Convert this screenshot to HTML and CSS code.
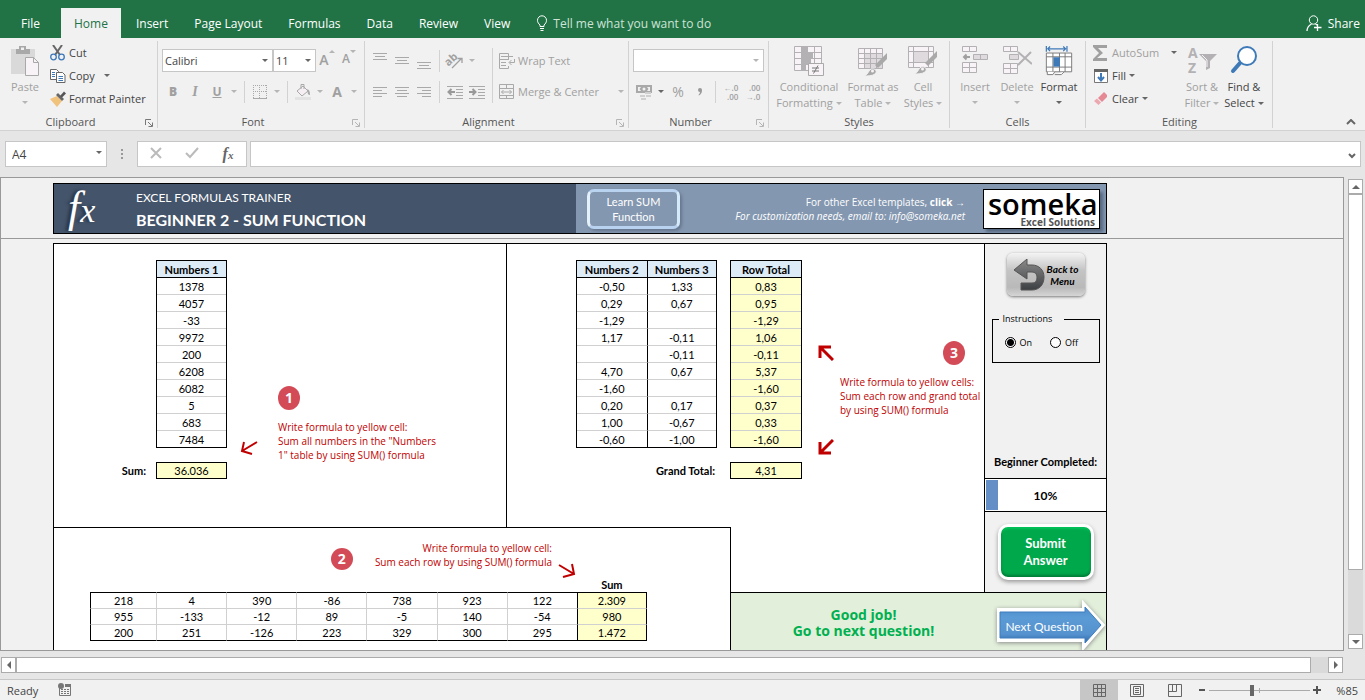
FILE: index.html
```
<!DOCTYPE html>
<html lang="en">
<head>
    <meta charset="UTF-8">
    <meta name="viewport" content="width=device-width, initial-scale=1.0">
    <title>Excel Formulas Trainer</title>
    <link rel="stylesheet" href="styles.css">
</head>
<body>
    <nav class="tabs">
        <a class="tab tab-file" href="#">File</a>
        <a class="tab active" href="#">Home</a>
        <a class="tab" href="#">Insert</a>
        <a class="tab" href="#">Page Layout</a>
        <a class="tab" href="#">Formulas</a>
        <a class="tab" href="#">Data</a>
        <a class="tab" href="#">Review</a>
        <a class="tab" href="#">View</a>
        <a class="tab tell-me" href="#">
            <svg width="12" height="16" viewBox="0 0 12 16" fill="none" stroke="#fff"><path d="M4 11.5V10C2.5 8.5 1.5 7.500 1.500 5.300a4.500 4.500 0 0 1 9 0C10.500 7.500 9.500 8.500 8 10v1.500zM4 13.500h4M4.500 15.500h3"/></svg>
            Tell me what you want to do
        </a>
        <a class="share" href="#">
            <svg width="16" height="17" viewBox="0 0 16 17" fill="none" stroke="#fff"><circle cx="7.500" cy="5" r="4.200"/><path d="M1 16c0-4 2-5.500 4.500-7M9.500 9l1.500 1M11.500 9v7M8 12.500h7.500" stroke-width="1.300"/></svg>
            Share
        </a>
    </nav>

    <div class="ribbon">
        <!-- Clipboard -->
        <section class="group group-clipboard">
            <div class="group-body">
                <button class="big off">
                    <svg width="30" height="30" viewBox="0 0 30 30"><path d="M1 3h24v25H1z" fill="#d9d9d9"/><path d="M6 3h3V0h7v3h4v5H6z" fill="#a9a9a9"/><path d="M11 1.500h3V4h-3z" fill="#f1f1f1"/><path d="M15.500 11.500h8l5 5v13h-13z" fill="#f8f3f7" stroke="#a9a9a9"/><path d="M23.500 11.500v5h5" fill="none" stroke="#a9a9a9"/></svg>
                    <span>Paste</span>
                    <i class="caret"></i>
                </button>
                <div class="stack">
                    <button class="small">
                        <svg width="16" height="16" viewBox="0 0 16 16" fill="none"><path d="M3 0l7 10M12 0L5 10" stroke="#666" stroke-width="2"/><circle cx="3.500" cy="12" r="2.800" stroke="#3e79b8" stroke-width="1.300"/><circle cx="11.500" cy="12" r="2.800" stroke="#3e79b8" stroke-width="1.300"/></svg>
                        Cut
                    </button>
                    <button class="small">
                        <svg width="16" height="16" viewBox="0 0 16 16" fill="#fff" stroke="#666"><path d="M.5 1.500h6l2 2v8h-8z"/><path d="M6.500 4.500h6l2.500 2.500v7.500H6.500z"/><path d="M2 4.500h3M2 6.500h3M2 8.500h3M8.500 8.500h4.500M8.500 10.500h4.500M8.500 12.500h4.500" stroke="#3e79b8"/></svg>
                        Copy <i class="caret copy-caret"></i>
                    </button>
                    <button class="small">
                        <svg width="16" height="16" viewBox="0 0 16 16"><path d="M0 8l7-3 5 5-5 6z" fill="#f0c27c"/><path d="M6 4l2-2 6 6-2 2z" fill="#666"/><path d="M10 5l4-4.500 2 2-4 4z" fill="#555"/></svg>
                        Format Painter
                    </button>
                </div>
            </div>
            <h2 class="caption with-launcher">Clipboard<svg class="launcher" width="8" height="8" viewBox="0 0 8 8" fill="none" stroke="#777"><path d="M.5 6V.5H6M3 3l4 4M7.500 3.500v4h-4"/></svg></h2>
        </section>

        <!-- Font -->
        <section class="group group-font">
            <div class="rows">
                <div class="row">
                    <span class="combo combo-font"><select aria-label="Font"><option>Calibri</option></select></span>
                    <span class="combo combo-size"><select aria-label="Font size"><option>11</option></select></span>
                    <button class="icon off grow" aria-label="Increase font size">A<i class="caret up"></i></button>
                    <button class="icon off shrink" aria-label="Decrease font size">A<i class="caret"></i></button>
                </div>
                <div class="row">
                    <button class="icon off"><b>B</b></button>
                    <button class="icon off"><em>I</em></button>
                    <button class="icon off"><u>U</u></button>
                    <button class="drop off" aria-label="Underline style"><i class="caret"></i></button>
                    <span class="vsep"></span>
                    <button class="icon off" aria-label="Borders">
                        <svg width="14" height="14" viewBox="0 0 14 14" fill="none" stroke="#a9a9a9"><path d="M0 .5h14M0 6.500h14M.5 0v13M6.500 0v13M13.500 0v13" stroke-dasharray="1 1"/><path d="M0 13.500h14"/></svg>
                    </button>
                    <button class="drop off" aria-label="Border style"><i class="caret"></i></button>
                    <span class="vsep"></span>
                    <button class="icon off" aria-label="Fill color">
                        <svg width="16" height="16" viewBox="0 0 16 16"><path d="M2 7l6-5 5 5-6 5z" fill="#f5eff3" stroke="#a9a9a9"/><path d="M6 5V.5h3V5" fill="none" stroke="#a9a9a9"/><path d="M12 5c3 1 3 4 3 6-2 0-3-2-2-4z" fill="#a9a9a9"/><path d="M0 13h16v3H0z" fill="#e3e3e3"/></svg>
                    </button>
                    <button class="drop off" aria-label="Fill colors"><i class="caret"></i></button>
                    <button class="icon off font-color">A</button>
                    <button class="drop off" aria-label="Font colors"><i class="caret"></i></button>
                </div>
            </div>
            <h2 class="caption with-launcher">Font<svg class="launcher" width="8" height="8" viewBox="0 0 8 8" fill="none" stroke="#b5b5b5"><path d="M.5 6V.5H6M3 3l4 4M7.500 3.500v4h-4"/></svg></h2>
        </section>

        <!-- Alignment -->
        <section class="group group-alignment">
            <div class="group-body">
                <div class="rows">
                    <div class="row">
                        <button class="icon off" aria-label="Top align"><svg width="14" height="16" viewBox="0 0 14 16" stroke="#a9a9a9"><path d="M0 .5h14M2 3.500h10M0 6.500h14"/></svg></button>
                        <button class="icon off" aria-label="Middle align"><svg width="14" height="16" viewBox="0 0 14 16" stroke="#a9a9a9"><path d="M0 4.500h14M2 7.500h10M0 10.500h14"/></svg></button>
                        <button class="icon off" aria-label="Bottom align"><svg width="14" height="16" viewBox="0 0 14 16" stroke="#a9a9a9"><path d="M0 9.500h14M2 12.500h10M0 15.500h14"/></svg></button>
                        <span class="vsep"></span>
                        <button class="icon off" aria-label="Orientation"><svg class="spill" width="18" height="16" viewBox="0 0 18 16"><text x="0" y="10" transform="rotate(-42 6 9)" font-size="11" font-weight="bold" fill="#a0a0a0">ab</text><path d="M6 15l9-9M11.500 5.500H16V10" fill="none" stroke="#a0a0a0" stroke-width="1.300"/></svg></button>
                        <button class="drop off" aria-label="Orientation options"><i class="caret"></i></button>
                    </div>
                    <div class="row">
                        <button class="icon off" aria-label="Align left"><svg width="14" height="12" viewBox="0 0 14 12" stroke="#a9a9a9"><path d="M0 1.500h14M0 4.500h9M0 7.500h14M0 10.500h9"/></svg></button>
                        <button class="icon off" aria-label="Center"><svg width="14" height="12" viewBox="0 0 14 12" stroke="#a9a9a9"><path d="M0 1.500h14M2 4.500h10M0 7.500h14M2 10.500h10"/></svg></button>
                        <button class="icon off" aria-label="Align right"><svg width="14" height="12" viewBox="0 0 14 12" stroke="#a9a9a9"><path d="M0 1.500h14M5 4.500h9M0 7.500h14M5 10.500h9"/></svg></button>
                        <span class="vsep"></span>
                        <button class="icon off" aria-label="Decrease indent"><svg width="16" height="14" viewBox="0 0 16 14" stroke="#a9a9a9"><path d="M0 1.500h16M9 4.500h7M9 7.500h7M9 10.500h7M0 13.500h16"/><path d="M2 7h6M4.500 4L1.500 7l3 3" fill="none" stroke="#999" stroke-width="2"/></svg></button>
                        <button class="icon off" aria-label="Increase indent"><svg width="16" height="14" viewBox="0 0 16 14" stroke="#a9a9a9"><path d="M0 1.500h16M9 4.500h7M9 7.500h7M9 10.500h7M0 13.500h16"/><path d="M0 7h6M3.500 4l3 3-3 3" fill="none" stroke="#999" stroke-width="2"/></svg></button>
                    </div>
                </div>
                <span class="vsep tall"></span>
                <div class="rows wide">
                    <button class="small off">
                        <svg width="16" height="16" viewBox="0 0 16 16" fill="none" stroke="#a9a9a9"><path d="M9.500 7V.5h-9v15h9V13M.5 6.500h9M2 3.500h12M2 9.500h5M2 12.500h5M15.500 6v3.500h-5M12.500 7l-2.500 2.500 2.500 2.500"/></svg>
                        Wrap Text
                    </button>
                    <button class="small off">
                        <svg width="16" height="16" viewBox="0 0 16 16" fill="none" stroke="#a9a9a9"><path d="M.5.5h14v14H.5zM.5 4.500h14M.5 11.500h14M7.500.5v4M7.500 11.500v3M2.500 8h10M4.500 6L2.500 8l2 2M10.500 6l2 2-2 2"/></svg>
                        Merge &amp; Center <i class="caret push"></i>
                    </button>
                </div>
            </div>
            <h2 class="caption with-launcher">Alignment<svg class="launcher" width="8" height="8" viewBox="0 0 8 8" fill="none" stroke="#b5b5b5"><path d="M.5 6V.5H6M3 3l4 4M7.500 3.500v4h-4"/></svg></h2>
        </section>

        <!-- Number -->
        <section class="group group-number">
            <div class="rows">
                <div class="row">
                    <span class="combo combo-number"><select aria-label="Number format"><option></option></select></span>
                </div>
                <div class="row">
                    <button class="icon off" aria-label="Currency"><svg width="16" height="16" viewBox="0 0 16 16"><path d="M0 1h16v8H0z" fill="#a9a9a9"/><path d="M2 3h3L3.500 5 5 7H2zM14 3h-3l1.500 2L11 7h3z" fill="#f1f1f1"/><circle cx="8" cy="5" r="1.500" fill="#f1f1f1"/><path d="M9 8h6v2H9zM10 11h5v2h-5zM4 11h5v2H4zM5 14h5v2H5z" fill="#d0d0d0"/></svg></button>
                    <button class="drop" aria-label="Currency formats"><i class="caret"></i></button>
                    <button class="icon off percent">%</button>
                    <button class="icon off" aria-label="Comma style"><svg width="6" height="8" viewBox="0 0 6 8"><path d="M3 0a2 2 0 0 1 2 2c0 3-1 4-3 5.500L1.500 7C2.500 6 3 5 3 4a2 2 0 0 1 0-4z" fill="#999"/></svg></button>
                    <span class="vsep"></span>
                    <button class="icon off decimal"><span>←.0<br>.00</span></button>
                    <button class="icon off decimal"><span>.00<br>→.0</span></button>
                </div>
            </div>
            <h2 class="caption with-launcher">Number<svg class="launcher" width="8" height="8" viewBox="0 0 8 8" fill="none" stroke="#b5b5b5"><path d="M.5 6V.5H6M3 3l4 4M7.500 3.500v4h-4"/></svg></h2>
        </section>

        <!-- Styles -->
        <section class="group group-styles">
            <div class="group-body">
                <button class="big off conditional">
                    <svg width="30" height="30" viewBox="0 0 30 30"><path d="M.5.5h27v24H.5z" fill="#f8f3f7"/><path d="M8 1h6v5H8zM8 7h11v5H8zM8 13h9v5H8zM8 19h4v5H8z" fill="#b3b1b3"/><path d="M.5.5h27v24H.5zM.5 6.500h27M.5 12.500h27M.5 18.500h27M7.500.5v24M20.500.5v24" fill="none" stroke="#b3b1b3"/><path d="M14.500 17.500h15v12h-15z" fill="#f8f3f7" stroke="#a9a9a9"/><path d="M18 22h7M18 25h7M24 19.500l-4.500 8" stroke="#777"/></svg>
                    <span>Conditional<br>Formatting<i class="caret"></i></span>
                </button>
                <button class="big off format-as">
                    <svg width="30" height="30" viewBox="0 0 30 30"><path d="M.5 2.500h24v20H.5z" fill="#f8f3f7"/><path d="M7 8h18v15H7z" fill="#dedade"/><path d="M.5 2.500h24v20H.5zM.5 7.500h24M.5 12.500h24M.5 17.500h24M6.500 2.500v20M12.500 2.500v20M18.500 2.500v20" fill="none" stroke="#b3b1b3"/><path d="M29 7v6l-9 9-3-3z" fill="#a9a9a9"/><path d="M6 30c4-1 4-5 7-7 4-1 7 2 4 5-3 2-7 2-11 2z" fill="#a9a9a9" stroke="#f1f1f1"/><circle cx="14.500" cy="25" r="1.500" fill="#f8f3f7"/></svg>
                    <span>Format as<br>Table<i class="caret"></i></span>
                </button>
                <button class="big off cell-styles">
                    <svg width="30" height="30" viewBox="0 0 30 30"><path d="M.5.5h25v21H.5z" fill="#f8f3f7"/><path d="M5 6h15v10H5z" fill="#dedade"/><path d="M.5.5h25v21H.5zM.5 5.500h25M.5 16.500h25M5.500.5v21M20.500.5v21" fill="none" stroke="#b3b1b3"/><path d="M29 5v6l-9 9-3-3z" fill="#a9a9a9"/><path d="M6 28c4-1 4-5 7-7 4-1 7 2 4 5-3 2-7 2-11 2z" fill="#a9a9a9" stroke="#f1f1f1"/><circle cx="14.500" cy="23" r="1.500" fill="#f8f3f7"/></svg>
                    <span>Cell<br>Styles<i class="caret"></i></span>
                </button>
            </div>
            <h2 class="caption">Styles</h2>
        </section>

        <!-- Cells -->
        <section class="group group-cells">
            <div class="group-body">
                <button class="big off">
                    <svg width="28" height="30" viewBox="0 0 28 30" fill="#f8f3f7" stroke="#b3b1b3"><path d="M1.500.5h14v5h-14zM8.500.5v5"/><path d="M12.500 8.500h14v5h-14zM19.500 8.500v5" fill="#dedade"/><path d="M1.500 16.500h14v10h-14zM1.500 21.500h14M8.500 16.500v10"/><path d="M9 11H3M5.500 8.500L3 11l2.500 2.500" fill="none" stroke="#a0a0a0" stroke-width="2"/></svg>
                    <span>Insert</span>
                    <i class="caret"></i>
                </button>
                <button class="big off">
                    <svg width="30" height="30" viewBox="0 0 30 30" fill="#f8f3f7" stroke="#b3b1b3"><path d="M1.500.5h14v5h-14zM8.500.5v5"/><path d="M7.500 8.500h9v5h-9z" fill="#dedade"/><path d="M1.500 17.500h14v10h-14zM1.500 22.500h14M8.500 17.500v10"/><path d="M16 6l14 12M29 6L16 19" fill="none" stroke-width="2"/></svg>
                    <span>Delete</span>
                    <i class="caret"></i>
                </button>
                <button class="big">
                    <svg width="28" height="32" viewBox="0 0 28 32" fill="#fff" stroke="#777"><path d="M.5 7.500h27v20H.5zM.5 11.500h27M.5 22.500h27M7.500 7.500v20M14.500 7.500v20M20.500 7.500v20"/><path d="M1.500 27.500v3h6l2-3M9.500 30.500h7l3-3"/><path d="M8 12h7v10H8z" fill="#3e79b8" stroke="none"/><path d="M.5 0v6M22.500 0v6M2 3h19M4.500.5L2 3l2.500 2.500M18.500.5L21 3l-2.500 2.500" fill="none" stroke="#3e79b8" stroke-width="1.300"/></svg>
                    <span>Format</span>
                    <i class="caret"></i>
                </button>
            </div>
            <h2 class="caption">Cells</h2>
        </section>

        <!-- Editing -->
        <section class="group group-editing">
            <div class="group-body">
                <div class="stack">
                    <button class="small off">
                        <svg width="16" height="16" viewBox="0 0 16 16"><path d="M0 0h14v3H5l5 5-6 5h10v3H0v-2l6-6L0 2z" fill="#a0a0a0"/></svg>
                        AutoSum <i class="caret dark push"></i>
                    </button>
                    <button class="small">
                        <svg width="16" height="16" viewBox="0 0 16 16"><path d="M1.500 1.500h13v13h-13z" fill="#fff" stroke="#777"/><path d="M1 1h14v3H1z" fill="#666"/><path d="M8 5v7M5 9l3 3.500L11 9" fill="none" stroke="#3e79b8" stroke-width="2"/></svg>
                        Fill<i class="caret"></i>
                    </button>
                    <button class="small">
                        <svg width="16" height="16" viewBox="0 0 16 16"><path d="M5 7l6-6 3 3v2l-5 5z" fill="#e58a94"/><path d="M1 10l3-2.500 4 4L5.500 14z" fill="#eda7ae"/></svg>
                        Clear<i class="caret"></i>
                    </button>
                </div>
                <button class="big off">
                    <svg class="spill" width="30" height="30" viewBox="0 0 30 30"><text x="1" y="12" font-size="14" font-weight="bold" fill="#b3b1b3">A</text><text x="1" y="27" font-size="14" font-weight="bold" fill="#b3b1b3">Z</text><path d="M12 8h18l-7 7v7l-4 2v-9z" fill="#b3b1b3"/><path d="M15 9l5 5v7" fill="none" stroke="#f8f3f7"/></svg>
                    <span>Sort &amp;<br>Filter<i class="caret"></i></span>
                </button>
                <button class="big">
                    <svg width="28" height="30" viewBox="0 0 28 30"><path d="M10 17l-7 8" stroke="#3e79b8" stroke-width="4" stroke-linecap="round"/><circle cx="17" cy="10" r="9" fill="#fff" stroke="#3e79b8" stroke-width="2"/></svg>
                    <span>Find &amp;<br>Select<i class="caret"></i></span>
                </button>
            </div>
            <h2 class="caption">Editing</h2>
        </section>
        <button class="collapse" aria-label="Collapse the ribbon"><svg width="10" height="6" viewBox="0 0 10 6" fill="none" stroke="#666" stroke-width="2"><path d="M1 5l4-4 4 4"/></svg></button>
    </div>

    <div class="formula-bar">
        <span class="combo name-box"><select aria-label="Name box"><option>A4</option></select></span>
        <svg class="grip" width="3" height="12" viewBox="0 0 3 12" fill="#999"><path d="M0 1h2v2H0zM0 5h2v2H0zM0 9h2v2H0z"/></svg>
        <div class="fx-buttons">
            <button aria-label="Cancel"><svg width="12" height="12" viewBox="0 0 12 12" stroke="#bbb" stroke-width="2"><path d="M1 1l10 10M11 1L1 11"/></svg></button>
            <button aria-label="Enter"><svg width="14" height="12" viewBox="0 0 14 12" fill="none" stroke="#bbb" stroke-width="2"><path d="M1 6l4 4 8-9"/></svg></button>
            <button class="fx-insert">f<small>x</small></button>
        </div>
        <div class="formula-field">
            <input type="text" aria-label="Formula">
            <button aria-label="Expand formula bar"><svg width="8" height="6" viewBox="0 0 8 6" fill="none" stroke="#666" stroke-width="2"><path d="M1 1l3 3 3-3"/></svg></button>
        </div>
    </div>

    <div class="window">
        <main class="sheet">
            <div class="frozen">
                <header class="banner">
                    <div class="banner-title">
                        <div class="fx-logo">f<span>x</span></div>
                        <div>
                            <p>EXCEL FORMULAS TRAINER</p>
                            <h1>BEGINNER 2 - SUM FUNCTION</h1>
                        </div>
                    </div>
                    <div class="banner-links">
                        <button class="learn">Learn SUM<br>Function</button>
                        <p class="contact">For other Excel templates, <a href="#">click →</a><br><i>For customization needs, email to: info@someka.net</i></p>
                        <div class="someka">
                            <strong>someka</strong>
                            <small>Excel Solutions</small>
                        </div>
                    </div>
                </header>
            </div>

            <div class="board">
                <!-- Question 1 -->
                <section class="q1">
                    <div class="tables">
                        <table class="data numbers">
                            <thead><tr><th>Numbers 1</th></tr></thead>
                            <tbody>
                                <tr><td>1378</td></tr>
                                <tr><td>4057</td></tr>
                                <tr><td>-33</td></tr>
                                <tr><td>9972</td></tr>
                                <tr><td>200</td></tr>
                                <tr><td>6208</td></tr>
                                <tr><td>6082</td></tr>
                                <tr><td>5</td></tr>
                                <tr><td>683</td></tr>
                                <tr><td>7484</td></tr>
                            </tbody>
                        </table>
                        <label class="total-label" for="sum">Sum:</label>
                        <input class="total" id="sum" type="text" value="36.036">
                    </div>
                    <svg class="arrow" width="18" height="16" viewBox="0 0 18 16" fill="none" stroke="#c00000" stroke-width="2"><path d="M17 2L2 11M4 2L2 11l10 3"/></svg>
                    <div class="note">
                        <span class="badge">1</span>
                        <p>Write formula to yellow cell:<br>Sum all numbers in the "Numbers<br>1" table by using SUM() formula</p>
                    </div>
                </section>

                <!-- Question 3 -->
                <section class="q3">
                    <div class="tables">
                        <table class="data numbers">
                            <thead><tr><th>Numbers 2</th><th>Numbers 3</th></tr></thead>
                            <tbody>
                                <tr><td>-0,50</td><td>1,33</td></tr>
                                <tr><td>0,29</td><td>0,67</td></tr>
                                <tr><td>-1,29</td><td></td></tr>
                                <tr><td>1,17</td><td>-0,11</td></tr>
                                <tr><td></td><td>-0,11</td></tr>
                                <tr><td>4,70</td><td>0,67</td></tr>
                                <tr><td>-1,60</td><td></td></tr>
                                <tr><td>0,20</td><td>0,17</td></tr>
                                <tr><td>1,00</td><td>-0,67</td></tr>
                                <tr><td>-0,60</td><td>-1,00</td></tr>
                            </tbody>
                        </table>
                        <table class="data numbers answer">
                            <thead><tr><th>Row Total</th></tr></thead>
                            <tbody>
                                <tr><td>0,83</td></tr>
                                <tr><td>0,95</td></tr>
                                <tr><td>-1,29</td></tr>
                                <tr><td>1,06</td></tr>
                                <tr><td>-0,11</td></tr>
                                <tr><td>5,37</td></tr>
                                <tr><td>-1,60</td></tr>
                                <tr><td>0,37</td></tr>
                                <tr><td>0,33</td></tr>
                                <tr><td>-1,60</td></tr>
                            </tbody>
                        </table>
                        <label class="total-label" for="grand-total">Grand Total:</label>
                        <input class="total" id="grand-total" type="text" value="4,31">
                    </div>
                    <div class="arrows">
                        <svg width="16" height="16" viewBox="0 0 16 16" fill="none" stroke="#c00000" stroke-width="3"><path d="M15 15L3 3M2 13V2h11"/></svg>
                        <svg width="16" height="16" viewBox="0 0 16 16" fill="none" stroke="#c00000" stroke-width="3"><path d="M15 1L3 13M2 3v11h11"/></svg>
                    </div>
                    <div class="note">
                        <span class="badge">3</span>
                        <p>Write formula to yellow cells:<br>Sum each row and grand total<br>by using SUM() formula</p>
                    </div>
                </section>

                <!-- Question 2 -->
                <section class="q2">
                    <div class="note">
                        <span class="badge">2</span>
                        <p>Write formula to yellow cell:<br>Sum each row by using SUM() formula</p>
                        <svg class="arrow" width="18" height="16" viewBox="0 0 18 16" fill="none" stroke="#c00000" stroke-width="2"><path d="M1 2l15 9M14 1l2 10-11 3"/></svg>
                    </div>
                    <table class="data sums">
                        <colgroup><col class="first-col"><col span="7"></colgroup>
                        <thead><tr><th colspan="7"></th><th>Sum</th></tr></thead>
                        <tbody>
                            <tr><td>218</td><td>4</td><td>390</td><td>-86</td><td>738</td><td>923</td><td>122</td><td>2.309</td></tr>
                            <tr><td>955</td><td>-133</td><td>-12</td><td>89</td><td>-5</td><td>140</td><td>-54</td><td>980</td></tr>
                            <tr><td>200</td><td>251</td><td>-126</td><td>223</td><td>329</td><td>300</td><td>295</td><td>1.472</td></tr>
                        </tbody>
                    </table>
                </section>

                <aside class="side">
                    <button class="back">
                        <svg width="32" height="32" viewBox="0 0 32 32"><defs><linearGradient id="steel" x1="0" y1="0" x2="0" y2="1"><stop offset="0" stop-color="#8a8a8a"/><stop offset="1" stop-color="#3c3f42"/></linearGradient></defs><path d="M1 11L14 0v6h5c7 0 12 5 12 12 0 8-5 13-12 13H8v-7h11c4 0 5-3 5-6s-2-5-5-5h-5v7z" fill="url(#steel)" stroke="#555"/></svg>
                        <span>Back to<br>Menu</span>
                    </button>
                    <fieldset class="instructions">
                        <legend>Instructions</legend>
                        <label><input type="radio" name="instructions" checked>On</label>
                        <label><input type="radio" name="instructions">Off</label>
                    </fieldset>
                    <h3 class="completed">Beginner Completed:</h3>
                    <div class="progress"><div class="progress-fill" style="width: 10%"></div><b>10%</b></div>
                    <button class="submit">Submit<br>Answer</button>
                </aside>

                <section class="result">
                    <p>Good job!<br>Go to next question!</p>
                    <button class="next">
                        <svg width="110" height="54" viewBox="0 0 110 54"><defs><linearGradient id="sky" x1="0" y1="0" x2="0" y2="1"><stop offset="0" stop-color="#4b8ccd"/><stop offset=".3" stop-color="#5b9bd5"/><stop offset=".75" stop-color="#5592cf"/><stop offset="1" stop-color="#2f69a6"/></linearGradient></defs><path d="M2 10h85V3l21 23-21 24v-8H2z" fill="#fff" stroke="#fff" stroke-width="2"/><path d="M4 13h85V8l16 18-16 18v-5H4z" fill="url(#sky)" stroke="#3f7cbd"/></svg>
                        <span>Next Question</span>
                    </button>
                </section>
            </div>
        </main>

        <div class="vscroll">
            <button aria-label="Scroll up"><i class="caret up"></i></button>
            <div class="thumb"></div>
            <div class="track"></div>
            <button aria-label="Scroll down"><i class="caret"></i></button>
        </div>
    </div>

    <div class="hscroll">
        <button aria-label="Scroll left"><i class="caret left"></i></button>
        <div class="thumb"></div>
        <div class="track"></div>
        <button aria-label="Scroll right"><i class="caret right"></i></button>
    </div>

    <footer class="status">
        <span>Ready</span>
        <svg class="macro" width="14" height="14" viewBox="0 0 14 14"><path d="M1.500 5v7.500h11v-10H7" fill="none" stroke="#777"/><path d="M7 1h6v3H7z" fill="#777"/><circle cx="3" cy="3" r="3" fill="#777"/><path d="M3 6.500h8M3 8.500h8M3 10.500h8" stroke="#777" stroke-dasharray="2 1"/></svg>
        <div class="views">
            <button class="current" aria-label="Normal view"><svg width="13" height="13" viewBox="0 0 13 13" fill="none" stroke="#666"><path d="M.5.5h12v12H.5zM.5 4.500h12M.5 8.500h12M4.500.5v12M8.500.5v12"/></svg></button>
            <button aria-label="Page layout view"><svg width="14" height="13" viewBox="0 0 14 13" fill="none" stroke="#666"><path d="M.5.5h13v12H.5zM3.500 2.500h7v8h-7zM5 4.500h4M5 6.500h4M5 8.500h4"/></svg></button>
            <button aria-label="Page break view"><svg width="14" height="13" viewBox="0 0 14 13" fill="none" stroke="#666"><path d="M.5.5h13v12H.5zM.5 7.500h8v-7M4.500.5v7"/></svg></button>
        </div>
        <div class="zoom">
            <button aria-label="Zoom out"><svg width="8" height="8" viewBox="0 0 8 8"><path d="M1 3h6v2H1z" fill="#555"/></svg></button>
            <input type="range" min="0" max="100" value="42" aria-label="Zoom">
            <button aria-label="Zoom in"><svg width="8" height="8" viewBox="0 0 8 8"><path d="M0 3h3V0h2v3h3v2H5v3H3V5H0z" fill="#555"/></svg></button>
            <span>%85</span>
        </div>
    </footer>
</body>
</html>
```
FILE: styles.css
```
/* General */
* {
    box-sizing: border-box;
}
body {
    margin: 0;
    height: 100vh;
    display: flex;
    flex-direction: column;
    overflow: hidden;
    background-color: #e6e6e6;
    color: #444;
    font-family: "Open Sans", "Noto Sans", sans-serif;
    font-size: 12px;
}
h1, h2, h3, p {
    margin: 0;
}
a {
    color: inherit;
    text-decoration: none;
}
svg {
    flex: none;
}
.spill {
    overflow: visible;
}
button {
    padding: 0;
    border: none;
    background: none;
    color: inherit;
    font: inherit;
    cursor: pointer;
}

/* Small triangle used by every drop-down */
.caret {
    display: inline-block;
    flex: none;
    border: 3px solid transparent;
    border-top-color: #666;
    border-bottom: none;
}
.caret.up {
    border-top: none;
    border-bottom: 3px solid #666;
}
.off {
    color: #a0a0a0;
}
.off .caret {
    border-top-color: #b5b5b5;
    border-bottom-color: #b5b5b5;
}
.off .caret.dark {
    border-top-color: #666;
}

/* Tabs */
.tabs {
    display: flex;
    flex: none;
    height: 38px;
    padding-top: 8px;
    background-color: #217346;
    color: #fff;
}
.tab {
    display: flex;
    align-items: center;
    padding: 0 13px;
}
.tab-file {
    padding: 0 21px;
}
.tab.active {
    margin-right: 2px;
    background-color: #f1f1f1;
    color: #217346;
}
.tell-me {
    gap: 5px;
    color: #cfe3d7;
}
.share {
    display: flex;
    align-items: center;
    gap: 6px;
    margin-left: auto;
    padding-right: 5px;
}

/* Ribbon */
.ribbon {
    display: flex;
    flex: none;
    padding: 3px 0 2px;
    background-color: #f1f1f1;
    border-bottom: 1px solid #d2d2d2;
    font-size: 11px;
}
.group {
    display: flex;
    flex-direction: column;
    justify-content: space-between;
    flex: none;
    height: 87px;
    border-right: 1px solid #d2d2d2;
}
.group-clipboard { width: 158px; padding-left: 4px; }
.group-font { width: 207px; padding-left: 4px; }
.group-alignment { width: 264px; padding-left: 4px; }
.group-number { width: 140px; padding-left: 4px; }
.group-styles { width: 181px; padding-left: 4px; }
.group-cells { width: 136px; padding-left: 4px; }
.group-editing { width: 187px; padding-left: 5px; }
.group-body {
    display: flex;
}
.caption {
    position: relative;
    height: 12px;
    padding-right: 4px;
    font-size: 11px;
    font-weight: normal;
    line-height: 12px;
    text-align: center;
    color: #555;
}
.with-launcher {
    padding-right: 20px;
}
.launcher {
    position: absolute;
    right: 4px;
    bottom: 1px;
}
.big {
    display: flex;
    flex-direction: column;
    align-items: center;
    width: 42px;
    height: 71px;
    padding-top: 5px;
    line-height: 16px;
    white-space: nowrap;
}
.big svg {
    height: 30px;
    margin-bottom: 3px;
}
.big > .caret {
    margin-top: 6px;
}
.big span .caret {
    margin: 0 0 2px 3px;
}
.conditional { width: 72px; }
.format-as { width: 56px; }
.cell-styles { width: 44px; }
.stack {
    width: 90px;
}
.group-clipboard .stack {
    width: 106px;
    margin-left: 2px;
}
.small {
    display: flex;
    align-items: center;
    gap: 3px;
    width: 100%;
    height: 23px;
    padding-left: 2px;
    white-space: nowrap;
}
.copy-caret {
    margin-left: 6px;
}
.push {
    margin-left: auto;
    margin-right: 4px;
}
.rows {
    display: flex;
    flex-direction: column;
    gap: 8px;
    padding-top: 8px;
}
.wide {
    flex: 1;
}
.row {
    display: flex;
    align-items: center;
    height: 23px;
}
.icon {
    display: flex;
    align-items: center;
    justify-content: center;
    flex: none;
    width: 22px;
    height: 22px;
    font-size: 12px;
    font-weight: bold;
}
.icon em {
    font-family: "Liberation Serif", serif;
    font-size: 14px;
}
.drop {
    display: flex;
    align-items: center;
    justify-content: center;
    width: 12px;
    height: 22px;
}
.grow, .shrink {
    align-items: flex-start;
    font-size: 12px;
    font-weight: 600;
}
.grow {
    font-size: 14px;
}
.font-color {
    font-size: 14px;
}
.percent {
    font-size: 14px;
    font-weight: normal;
}
.decimal {
    font-size: 8px;
    font-weight: 600;
    line-height: 9px;
    text-align: right;
}
.vsep {
    width: 1px;
    height: 22px;
    margin: 0 4px;
    background-color: #d2d2d2;
}
.vsep.tall {
    height: 55px;
    margin-top: 7px;
}
.collapse {
    align-self: flex-end;
    margin-left: auto;
    padding-right: 9px;
}

/* Drop-down boxes */
.combo {
    position: relative;
    display: flex;
    height: 23px;
}
.combo::after {
    content: "";
    position: absolute;
    right: 5px;
    top: 10px;
    border: 3px solid transparent;
    border-top-color: #666;
    border-bottom: none;
    pointer-events: none;
}
.combo select {
    width: 100%;
    padding: 0 2px;
    border: 1px solid #c6c6c6;
    border-radius: 0;
    background-color: #fff;
    color: #444;
    font: inherit;
    appearance: none;
}
.combo-font { width: 111px; }
.combo-size { width: 43px; }
.combo-number { width: 131px; }
.combo-number::after {
    border-top-color: #b5b5b5;
}

/* Formula bar */
.formula-bar {
    display: flex;
    align-items: center;
    flex: none;
    height: 46px;
    padding: 0 4px 0 5px;
    font-size: 12px;
}
.name-box {
    width: 102px;
    height: 26px;
}
.name-box select {
    padding: 0 6px;
}
.grip {
    margin: 0 13px 0 14px;
}
.fx-buttons {
    display: flex;
    width: 110px;
    height: 26px;
    margin-right: 3px;
    border: 1px solid #c6c6c6;
    background-color: #fff;
}
.fx-buttons button {
    flex: 1;
}
.fx-insert {
    font-family: "Liberation Serif", serif;
    font-size: 16px;
    font-style: italic;
    font-weight: bold;
    color: #666;
}
.fx-insert small {
    font-size: 11px;
}
.formula-field {
    display: flex;
    flex: 1;
    height: 26px;
    border: 1px solid #c6c6c6;
    background-color: #fff;
}
.formula-field input {
    flex: 1;
    border: none;
    outline: none;
    font: inherit;
}
.formula-field button {
    width: 16px;
}

/* Worksheet window */
.window {
    display: flex;
    flex: 1;
    min-height: 0;
}
.sheet {
    display: flex;
    flex-direction: column;
    flex: 1;
    min-width: 0;
    overflow: hidden;
    border: 1px solid #999;
    background-color: #f1f1f1;
    color: #000;
    font-family: Lato, "Open Sans", sans-serif;
    font-size: 12px;
}
.frozen {
    flex: none;
    padding: 5px 52px 4px;
    border-bottom: 1px solid #999;
}
.banner {
    display: grid;
    grid-template-columns: 522fr 530fr;
    max-width: 1054px;
    border: 1px solid #000;
    color: #fff;
}
.banner-title {
    display: flex;
    align-items: center;
    height: 49px;
    padding-top: 2px;
    background-color: #44546a;
}
.banner-title p {
    font-size: 12px;
    line-height: 20px;
}
.banner-title h1 {
    font-size: 16px;
    line-height: 23px;
}
.fx-logo {
    width: 82px;
    padding-left: 14px;
    font-family: "Liberation Serif", serif;
    font-size: 44px;
    font-style: italic;
    line-height: 44px;
    text-shadow: -3px 0 3px #2a3544;
}
.fx-logo span {
    font-size: 34px;
}
.banner-links {
    display: flex;
    align-items: center;
    background-color: #8497b0;
}
.learn {
    width: 93px;
    height: 40px;
    margin-left: 11px;
    border: 3px solid #b8d2f0;
    border-left-color: #e4f1fb;
    border-right-color: #d4e9fa;
    border-radius: 7px;
    box-shadow: 2px 2px 3px #66788f;
    font-size: 11px;
    line-height: 15px;
}
.contact {
    flex: 1;
    padding-right: 18px;
    font-family: "Open Sans", sans-serif;
    font-size: 10px;
    line-height: 14px;
    text-align: right;
}
.contact a {
    font-weight: bold;
}
.someka {
    width: 117px;
    height: 40px;
    margin-right: 6px;
    padding: 0 4px;
    border: 1px solid #000;
    background-color: #fff;
    box-shadow: 3px 3px 3px #56677f;
    color: #000;
    font-family: "Open Sans", sans-serif;
}
.someka strong, .someka small {
    display: block;
    text-align: right;
}
.someka strong {
    font-size: 29px;
    font-weight: 600;
    line-height: 27px;
}
.someka small {
    font-size: 10px;
    font-weight: bold;
    line-height: 10px;
    color: #555;
}

/* Board with the three questions */
.board {
    display: grid;
    grid-template-columns: 452fr 225fr 253fr 122fr;
    grid-template-rows: auto auto 1fr;
    flex: 1;
    max-width: 1054px;
    margin: 4px 52px 0;
    border: 1px solid #000;
    border-bottom: none;
    background-color: #fff;
}
.q1, .q3 {
    display: flex;
    padding-top: 16px;
}
.q1 {
    grid-area: 1 / 1 / 2 / 2;
    padding-left: 41px;
    padding-bottom: 48px;
}
.q3 {
    grid-area: 1 / 2 / 3 / 4;
    padding-left: 69px;
    border-left: 1px solid #000;
}
.q2 {
    grid-area: 2 / 1 / 4 / 3;
    padding-left: 36px;
    border-top: 1px solid #000;
    border-right: 1px solid #000;
    background-color: #fff;
}
.side {
    grid-area: 1 / 4 / 3 / 5;
    border-left: 1px solid #000;
    background-color: #f1f1f1;
}
.result {
    grid-area: 3 / 3 / 4 / 5;
    display: flex;
    border-top: 1px solid #000;
    background-color: #e2efda;
}

/* Tables */
.data {
    border-collapse: separate;
    border-spacing: 0;
    table-layout: fixed;
    font-size: 11px;
    text-align: center;
}
.data th, .data td {
    padding: 0;
    line-height: 15px;
}
.numbers {
    width: 100%;
    border: 1px solid #000;
}
.numbers th {
    height: 17px;
    border-bottom: 1px solid #000;
    background-color: #ddebf7;
}
.numbers td {
    height: 17px;
    border-top: 1px solid #d0d0d0;
}
.numbers tr:first-child td {
    height: 16px;
    border-top: none;
}
.numbers th + th, .numbers td + td {
    border-left: 1px solid #000;
}
.answer td {
    background-color: #ffffcc;
}
.tables {
    display: grid;
    gap: 14px 13px;
    align-content: start;
}
.q1 .tables {
    grid-template-columns: 51px 71px;
    column-gap: 10px;
    margin-right: 13px;
}
.q1 .numbers {
    grid-column: 2;
}
.q3 .tables {
    grid-template-columns: 141px 72px;
}
.total-label {
    font-size: 11px;
    font-weight: bold;
    line-height: 17px;
    text-align: right;
}
.q3 .total-label {
    padding-right: 2px;
}
.total {
    width: 100%;
    height: 17px;
    padding: 0;
    border: 1px solid #000;
    background-color: #ffffcc;
    font: inherit;
    font-size: 11px;
    text-align: center;
}
.sums {
    width: 557px;
}
.sums .first-col {
    width: 66px;
}
.sums th {
    height: 16px;
}
.sums td {
    height: 16px;
    border-top: 1px solid #d0d0d0;
    border-left: 1px solid #d0d0d0;
}
.sums tr:first-child td {
    border-top-color: #000;
}
.sums td:first-child {
    border-left-color: #000;
}
.sums tr:last-child td {
    height: 17px;
    border-bottom: 1px solid #000;
}
.sums td:last-child {
    border-left-color: #000;
    border-right: 1px solid #000;
    background-color: #ffffcc;
}

/* Instruction notes */
.note {
    color: #c00000;
    font-family: "Open Sans", sans-serif;
    font-size: 10px;
    line-height: 14px;
    white-space: nowrap;
}
.badge {
    display: block;
    width: 22px;
    height: 24px;
    border-radius: 50%;
    background-color: #d24b57;
    color: #fff;
    font-size: 14px;
    font-weight: bold;
    line-height: 24px;
    text-align: center;
}
.q1 .arrow {
    margin-top: 180px;
}
.q1 .note {
    margin-left: 20px;
    padding-top: 126px;
}
.q1 .badge, .q3 .badge {
    margin-bottom: 10px;
}
.arrows {
    display: flex;
    flex-direction: column;
    gap: 78px;
    padding: 85px 6px 0 16px;
}
.q3 .note {
    padding-top: 81px;
}
.q3 .badge {
    margin-left: 103px;
}
.q2 .note {
    display: flex;
    justify-content: flex-end;
    width: 486px;
    height: 48px;
    padding-top: 13px;
    text-align: right;
}
.q2 .badge {
    height: 22px;
    margin: 7px 22px 0 0;
    line-height: 22px;
}
.q2 .arrow {
    margin: 22px 0 0 6px;
}

/* Side panel */
.side {
    display: flex;
    flex-direction: column;
    align-items: center;
    padding-top: 9px;
}
.back {
    display: flex;
    align-items: center;
    justify-content: center;
    gap: 2px;
    width: 78px;
    height: 43px;
    border-radius: 6px;
    background: linear-gradient(#f4f4f4, #c4c4c4 40%, #b9b9b9 80%, #d5d5d5);
    box-shadow: 0 1px 3px #777;
    font-size: 10px;
    font-style: italic;
    font-weight: bold;
    line-height: 12px;
}
.instructions {
    display: flex;
    align-items: center;
    gap: 18px;
    width: 108px;
    height: 50px;
    margin: 17px 0 0;
    padding: 11px 0 0 12px;
    border: 1px solid #000;
    font-family: "Open Sans", sans-serif;
    font-size: 9px;
}
.instructions legend {
    margin-left: -6px;
    padding: 0 12px 0 4px;
    line-height: 12px;
}
.instructions label {
    display: flex;
    align-items: center;
    gap: 4px;
}
.instructions input {
    width: 11px;
    height: 11px;
    margin: 0;
    border: 1px solid #000;
    border-radius: 50%;
    background-color: #fff;
    appearance: none;
}
.instructions input:checked {
    background: radial-gradient(circle, #000 3px, #fff 4px);
}
.completed {
    margin-top: auto;
    padding-top: 91px;
    font-size: 11px;
    line-height: 16px;
    white-space: nowrap;
}
.progress {
    position: relative;
    display: flex;
    align-items: center;
    justify-content: center;
    align-self: stretch;
    height: 34px;
    margin-top: 8px;
    border: 1px solid #000;
    border-width: 1px 0;
    background-color: #fff;
}
.progress-fill {
    position: absolute;
    top: 1px;
    bottom: 1px;
    left: 1px;
    background-color: #638ec6;
}
.progress b {
    position: relative;
}
.submit {
    width: 96px;
    height: 56px;
    margin: 12px 0;
    border: 3px solid #fff;
    border-radius: 10px;
    background-color: #00a84c;
    box-shadow: 0 2px 4px #999, inset 0 -2px 3px #007a37, inset 0 2px 2px #00c45a;
    color: #fff;
    font-size: 13px;
    font-weight: bold;
    line-height: 17px;
}
.result p {
    flex: 1;
    padding-top: 14px;
    color: #00b050;
    font-family: "Open Sans", sans-serif;
    font-size: 14px;
    font-weight: bold;
    line-height: 16px;
    text-align: center;
}
.next {
    display: grid;
    align-self: flex-start;
    margin-top: 6px;
    color: #fff;
}
.next svg, .next span {
    grid-area: 1 / 1;
}
.next svg {
    filter: drop-shadow(0 1px 2px #888);
}
.next span {
    position: relative;
    align-self: center;
    padding-right: 14px;
}

/* Scroll bars */
.vscroll {
    display: flex;
    flex-direction: column;
    width: 15px;
    margin: 2px 2px 2px 4px;
}
.hscroll {
    display: flex;
    flex: none;
    height: 16px;
    margin: 6px 22px 6px 1px;
}
.vscroll button, .hscroll button {
    display: flex;
    align-items: center;
    justify-content: center;
    flex: none;
    width: 15px;
    height: 15px;
    border: 1px solid #ababab;
    background-color: #fff;
}
.vscroll .caret, .hscroll .caret {
    border-width: 4px;
}
.vscroll .caret {
    border-top-width: 0;
}
.vscroll .caret:not(.up) {
    border-top-width: 4px;
    border-bottom-width: 0;
}
.hscroll .caret {
    border-color: transparent;
}
.hscroll .caret.left {
    border-right-color: #666;
    border-left-width: 0;
    border-bottom: 4px solid transparent;
}
.hscroll .caret.right {
    border-left-color: #666;
    border-right-width: 0;
    border-bottom: 4px solid transparent;
}
.thumb {
    border: 1px solid #ababab;
    background-color: #fff;
}
.track {
    background-color: #dadada;
}
.vscroll .thumb { flex: 377; }
.vscroll .track { flex: 64; }
.hscroll .thumb { flex: 1293; }
.hscroll .track { flex: 17; }
.hscroll button {
    height: 16px;
}

/* Status bar */
.status {
    display: flex;
    align-items: center;
    flex: none;
    height: 21px;
    border-top: 1px solid #c6c6c6;
    padding-left: 7px;
    background-color: #f1f1f1;
    font-size: 11px;
}
.macro {
    margin-left: 20px;
}
.views {
    display: flex;
    align-self: stretch;
    margin-left: auto;
}
.views button {
    display: flex;
    align-items: center;
    justify-content: center;
    width: 38px;
}
.views .current {
    background-color: #c6c6c6;
}
.zoom {
    display: flex;
    align-items: center;
    gap: 3px;
    padding: 0 7px 0 4px;
}
.zoom button {
    display: flex;
}
.zoom span {
    margin-left: 12px;
}
.zoom input {
    width: 101px;
    height: 12px;
    margin: 0;
    background: linear-gradient(#aaa, #aaa) center / 100% 1px no-repeat, linear-gradient(#aaa, #aaa) center / 1px 5px no-repeat;
    appearance: none;
}
.zoom input::-webkit-slider-thumb {
    width: 4px;
    height: 11px;
    background-color: #666;
    appearance: none;
}
```
